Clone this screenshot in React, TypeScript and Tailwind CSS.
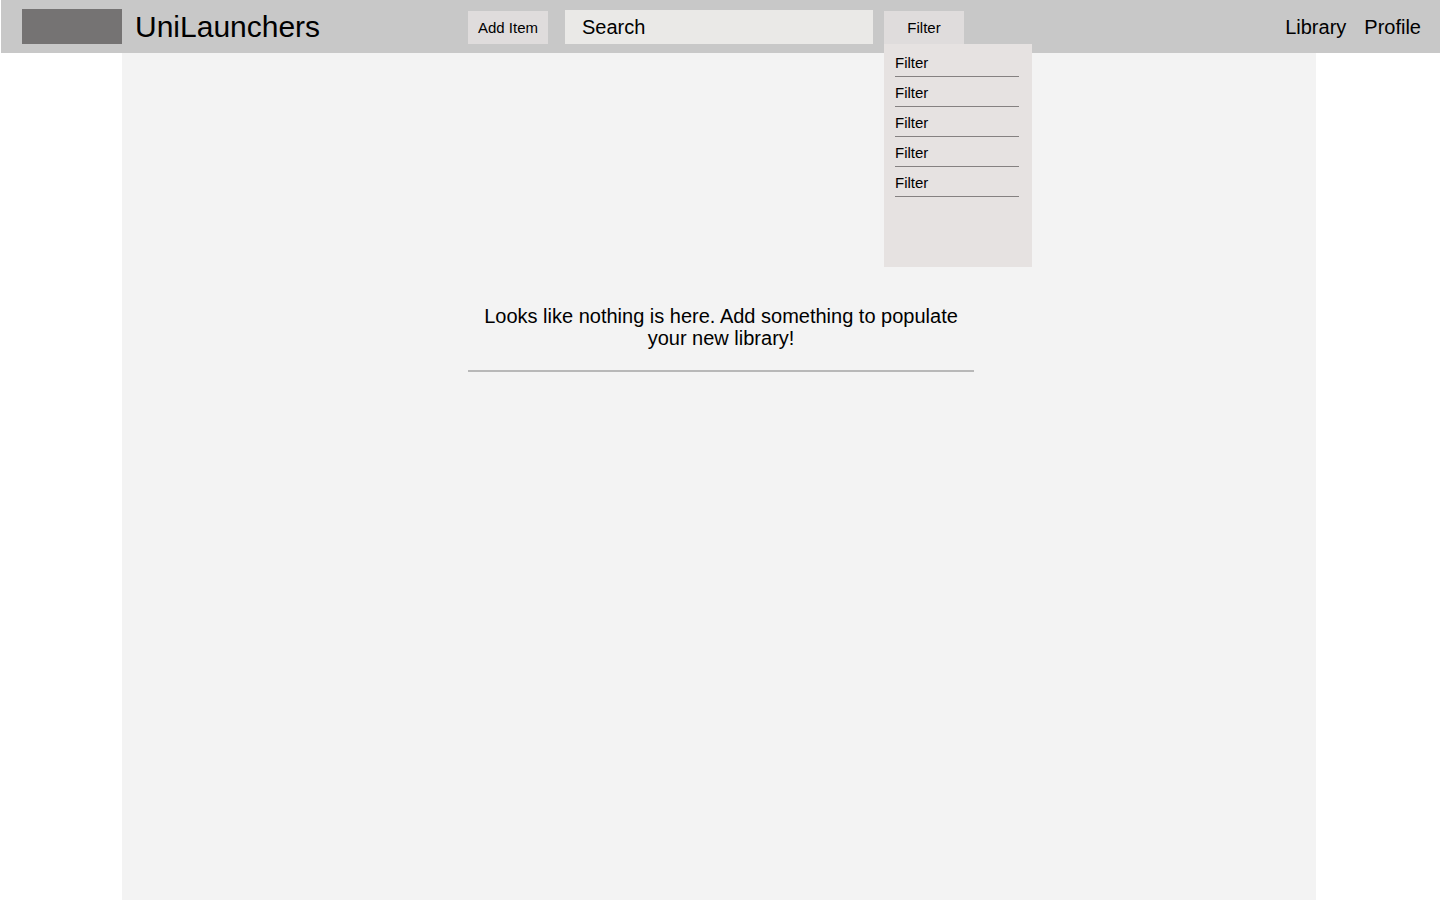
import { useState } from "react";

const filters = [1, 2, 3, 4, 5];

function FilterMenu() {
  const [open, setOpen] = useState(true);
  return (
    <div className="relative">
      <button
        type="button"
        aria-expanded={open}
        onClick={() => setOpen(!open)}
        className="block h-[33px] w-20 bg-[#dfdcdc] text-[15px] leading-[17px]"
      >
        Filter
      </button>
      {open && (
        <ul className="absolute top-full left-0 z-10 h-[223px] w-[148px] bg-[#e6e2e1] pt-[3px] pr-[13px] pl-[11px]">
          {filters.map((id) => (
            <li key={id}>
              <button
                type="button"
                className="block w-full border-b border-[#858181] pt-[7px] pb-[5px] text-left text-[15px] leading-[17px]"
              >
                Filter
              </button>
            </li>
          ))}
        </ul>
      )}
    </div>
  );
}

function Header() {
  return (
    <header className="ml-px grid h-[53px] grid-cols-[1fr_507px_1fr] items-end bg-[#c8c8c8] pr-[19px] pb-[9px] pl-[21px]">
      <div className="flex h-[35px] items-center gap-[13px]">
        <div className="h-full w-[100px] bg-[#757373]" />
        <h1 className="text-[30px] leading-[34px]">UniLaunchers</h1>
      </div>
      <div className="flex items-end pr-[11px]">
        <button type="button" className="h-[33px] w-20 bg-[#dfdcdc] text-[15px] leading-[17px]">
          Add Item
        </button>
        <input
          type="search"
          aria-label="Search"
          placeholder="Search"
          className="mr-[11px] ml-[17px] h-[34px] min-w-0 flex-1 bg-[#eae9e7] px-[17px] text-xl text-black outline-none placeholder:text-black placeholder:opacity-100"
        />
        <FilterMenu />
      </div>
      <nav className="flex h-[35px] items-center justify-end gap-[18px] text-xl leading-[22px]">
        <a href="#library">Library</a>
        <a href="#profile">Profile</a>
      </nav>
    </header>
  );
}

export default function App() {
  return (
    <div className="flex min-h-screen flex-col bg-white font-['Liberation_Sans',Arial,sans-serif] text-black">
      <Header />
      <main className="mr-[124px] ml-[122px] flex-1 bg-[#f3f3f3] pt-[252px] pl-1">
        <p className="mx-auto max-w-[506px] border-b-2 border-[#b8b8b8] pb-[21px] text-center text-xl leading-[22px]">
          Looks like nothing is here. Add something to populate your new library!
        </p>
      </main>
    </div>
  );
}
